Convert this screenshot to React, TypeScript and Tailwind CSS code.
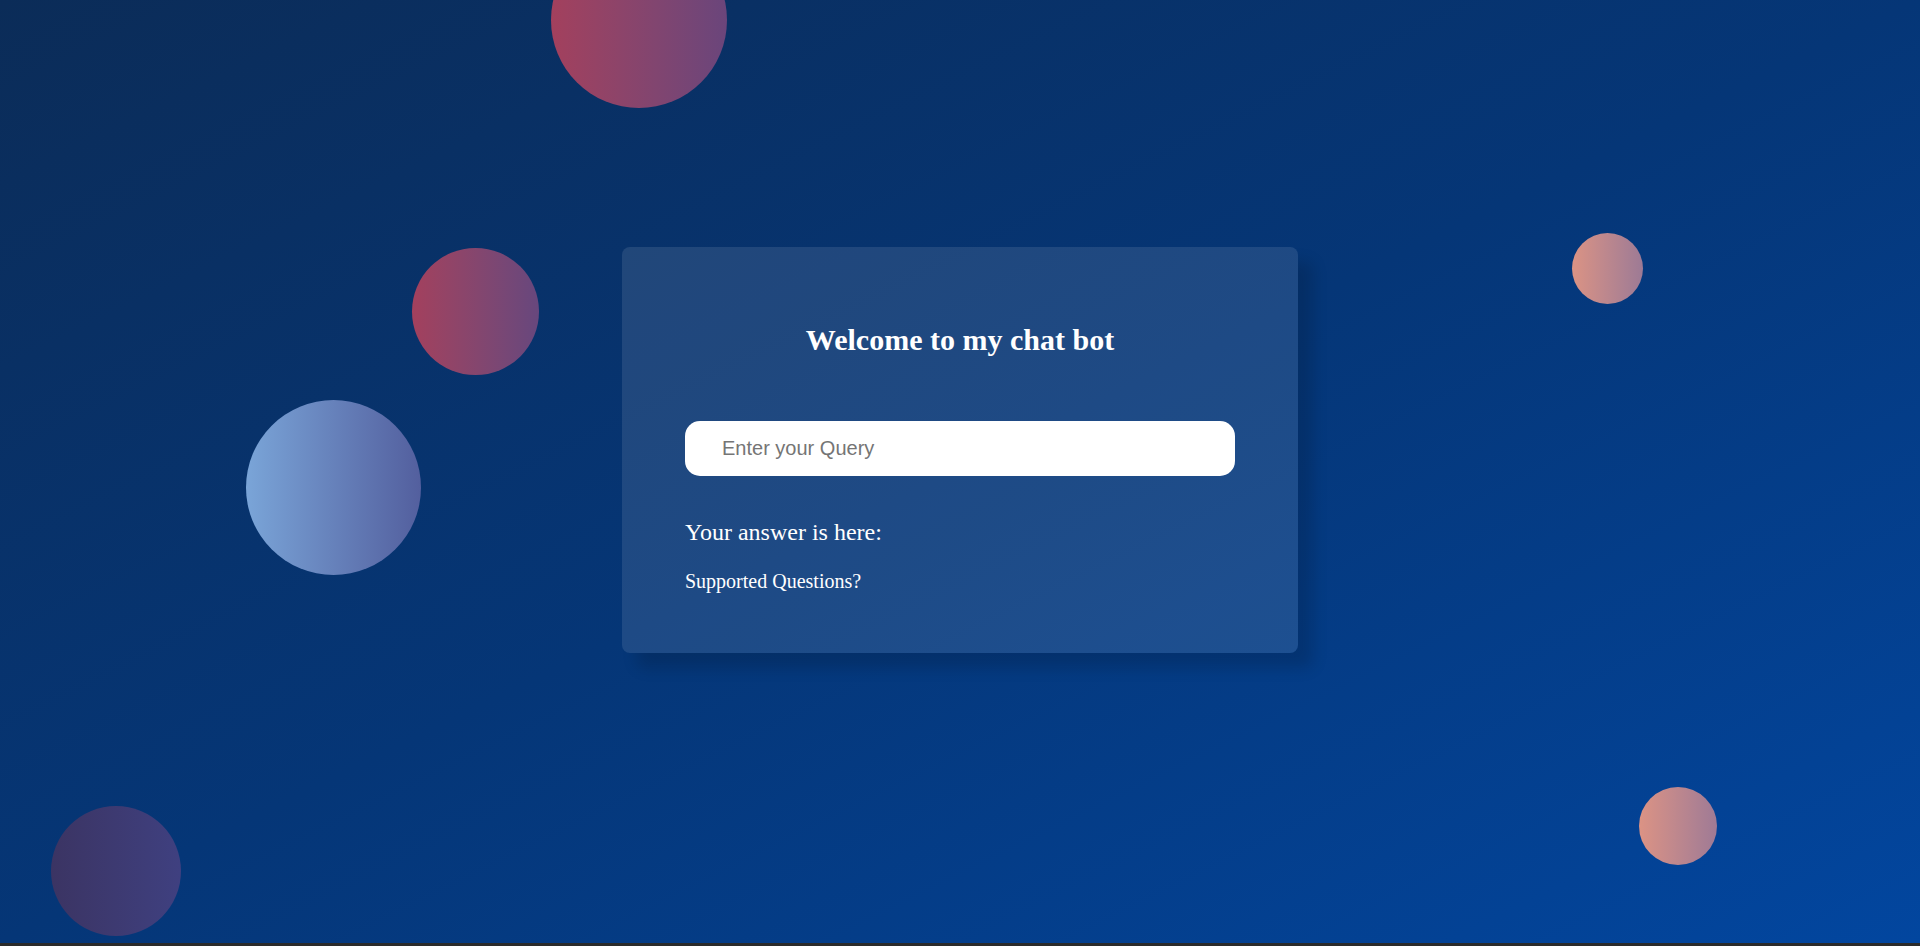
import { useState } from "react";

const serif = "font-['Liberation_Serif','Times_New_Roman',serif]";

function App() {
  const [query, setQuery] = useState("");

  return (
    <div className="h-screen w-full bg-[#2b2b2b]">
      <div className="relative h-[943px] w-full overflow-hidden bg-gradient-to-br from-[#0b2c58] via-[#053677] to-[#02469f]">
        {/* floating bubbles */}
        <div className="absolute left-[551px] top-[-68px] h-[176px] w-[176px] rounded-full bg-gradient-to-r from-[#a3405d] to-[#6a457b]" />
        <div className="absolute left-[412px] top-[248px] h-[127px] w-[127px] rounded-full bg-gradient-to-r from-[#a3405d] to-[#67477d]" />
        <div className="absolute left-[246px] top-[400px] h-[175px] w-[175px] rounded-full bg-gradient-to-r from-[#7aa5d8] to-[#535f9e]" />
        <div className="absolute left-[51px] top-[806px] h-[130px] w-[130px] rounded-full bg-gradient-to-r from-[#3b3463] to-[#3f4080]" />
        <div className="absolute left-[1572px] top-[233px] h-[71px] w-[71px] rounded-full bg-gradient-to-r from-[#db9384] to-[#9d7a95]" />
        <div className="absolute left-[1639px] top-[787px] h-[78px] w-[78px] rounded-full bg-gradient-to-r from-[#dc9384] to-[#9f7a95]" />

        <div className="relative flex justify-center pt-[247px]">
          <div className="flex h-[406px] w-[676px] flex-col rounded-lg bg-white/10 px-[63px] pt-[76px] shadow-[15px_15px_15px_rgba(0,0,0,0.15)]">
            <h2 className={`${serif} text-center text-[30px] font-bold leading-[34px] text-white`}>
              Welcome to my chat bot
            </h2>

            <input
              type="text"
              value={query}
              placeholder="Enter your Query"
              onChange={(e) => setQuery(e.target.value)}
              className="mt-[64px] h-[55px] w-full rounded-[15px] bg-white pl-[37px] font-['Liberation_Sans',Arial,sans-serif] text-[20px] text-black outline-none placeholder:text-[#757575]"
            />

            <p className={`${serif} mt-[42px] text-[24px] leading-[28px] text-white`}>
              Your answer is here:
            </p>
            <p className={`${serif} mt-[23px] text-[20px] leading-[24px] text-white`}>
              Supported Questions?
            </p>
          </div>
        </div>
      </div>
    </div>
  );
}

export default App;
